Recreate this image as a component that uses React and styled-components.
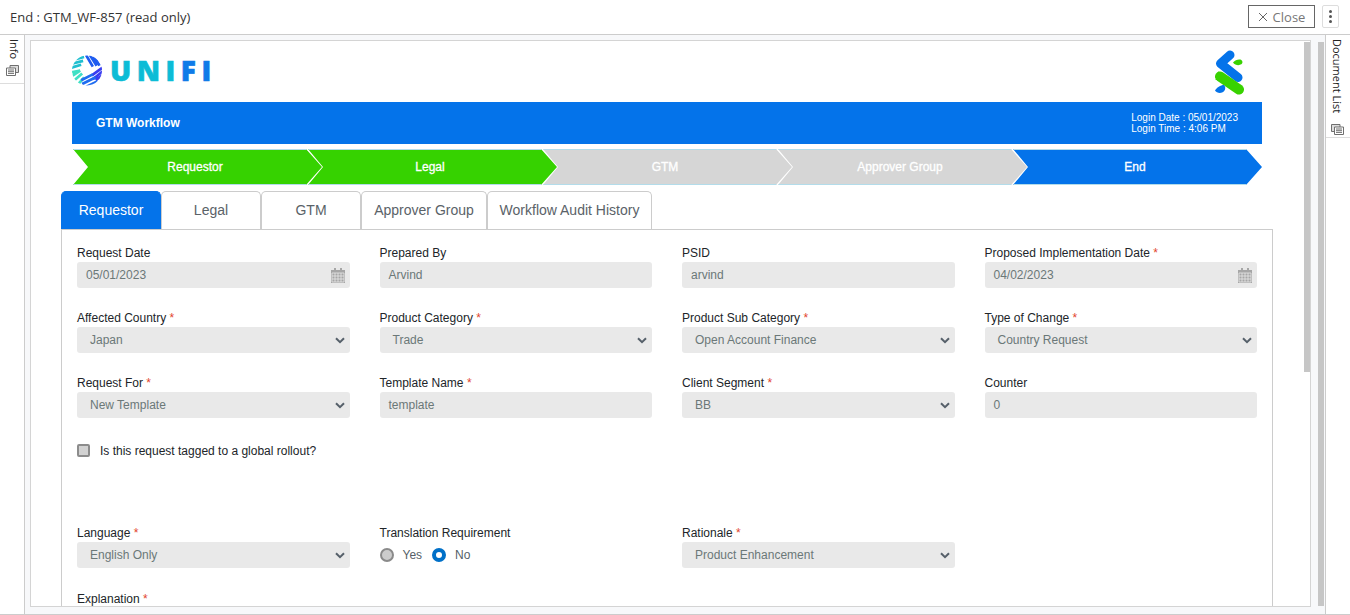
import React from "react";
import styled, { createGlobalStyle } from "styled-components";

const steps = [
  { label: "Requestor", tone: "done" },
  { label: "Legal", tone: "done" },
  { label: "GTM", tone: "todo" },
  { label: "Approver Group", tone: "todo" },
  { label: "End", tone: "current" },
];

const tabs = [
  { label: "Requestor", width: 100, active: true },
  { label: "Legal", width: 100 },
  { label: "GTM", width: 100 },
  { label: "Approver Group", width: 126 },
  { label: "Workflow Audit History", width: 165 },
];

const topFields = [
  { label: "Request Date", value: "05/01/2023", kind: "date" },
  { label: "Prepared By", value: "Arvind" },
  { label: "PSID", value: "arvind" },
  { label: "Proposed Implementation Date", value: "04/02/2023", kind: "date", required: true },
  { label: "Affected Country", value: "Japan", kind: "select", required: true },
  { label: "Product Category", value: "Trade", kind: "select", required: true },
  { label: "Product Sub Category", value: "Open Account Finance", kind: "select", required: true },
  { label: "Type of Change", value: "Country Request", kind: "select", required: true },
  { label: "Request For", value: "New Template", kind: "select", required: true },
  { label: "Template Name", value: "template", required: true },
  { label: "Client Segment", value: "BB", kind: "select", required: true },
  { label: "Counter", value: "0" },
];

const DocsIcon = ({ flip }) => (
  <svg width="13" height="11" viewBox="0 0 13 11" style={flip ? { transform: "scaleX(-1)" } : undefined}>
    <path d="M4 .5h8.500v7H4z" fill="#ddd" stroke="#6f6f6f" />
    <path d="M.5 3h9v7.500h-9z" fill="#fff" stroke="#6f6f6f" />
    <path d="M2 5h6M2 6.700h6M2 8.400h6" stroke="#6f6f6f" />
  </svg>
);

const Chevron = () => (
  <svg width="10" height="7" viewBox="0 0 10 7">
    <path d="M1 1.200l4 4 4-4" fill="none" stroke="#56606a" strokeWidth="2" />
  </svg>
);

const CalendarIcon = () => (
  <svg width="14" height="15" viewBox="0 0 14 15">
    <path d="M0 2h14v13H0z" fill="#a6a6a6" />
    <path d="M3 0h2v3H3zM9 0h2v3H9z" fill="#a6a6a6" />
    <path d="M1 5h12M1 8h12M1 11h12M1 14h12M1 5v9M4 5v9M7 5v9M10 5v9M13 5v9" stroke="#e9e9e9" strokeWidth=".8" fill="none" />
  </svg>
);

const UnifiMark = () => (
  <svg width="32" height="31" viewBox="0 0 32 32">
    <defs>
      <clipPath id="ring">
        <circle cx="16" cy="16" r="15.5" />
      </clipPath>
    </defs>
    <g clipPath="url(#ring)" fill="none" strokeWidth="2.800">
      <path d="M1 5l12-3M0 9l12-3M0 13l10-3" stroke="#1fbfd0" />
      <path d="M0 18l9-2M0 22l9-6M3 26l8-7M7 30l6-7" stroke="#3fe0c5" />
      <path d="M15 0l7 12M19 0l7 11M23 1l6 10" stroke="#1f5cf0" />
      <path d="M32 13l-11 8M32 17l-10 8M32 21l-7 5" stroke="#3a3df0" />
      <path d="M10 26l12-6M11 30l14-7M15 33l12-6" stroke="#1f6cf0" />
    </g>
  </svg>
);

const BankMark = () => (
  <svg width="30" height="46" viewBox="0 0 30 46">
    <path d="M15 5L5.500 13.500 23 27.500" fill="none" stroke="#0473ea" strokeWidth="9" strokeLinecap="round" strokeLinejoin="round" />
    <path d="M18 12.500c2-2.500 5-3.500 7.500-3 2.200.8 2.600 3.500.8 4.800-2.300 1.500-6.300 1-8.300-1.800z" fill="#38d200" />
    <path d="M5 26.500L24 39.500" fill="none" stroke="#38d200" strokeWidth="10" strokeLinecap="round" />
    <path d="M3.500 21L.5 30l6-1z" fill="#38d200" />
    <path d="M0 40.500c1.500-3 5.500-5.500 9-5.500 1.700 1.700 1.700 4.500 0 6.300-2.800 2.700-7.500 1.700-9-.8z" fill="#0473ea" />
  </svg>
);

const Field = ({ label, value, kind, required }) => (
  <Cell>
    <FieldLabel>
      {label}
      {required && <Star> *</Star>}
    </FieldLabel>
    <Control $select={kind === "select"}>
      <span>{value}</span>
      {kind === "select" && <Chevron />}
      {kind === "date" && <CalendarIcon />}
    </Control>
  </Cell>
);

const App = () => (
  <Screen>
    <GlobalStyle />
    <TopBar>
      <Title>End : GTM_WF-857 (read only)</Title>
      <TopActions>
        <CloseButton>
          <svg width="10" height="10" viewBox="0 0 10 10">
            <path d="M1 1l8 8M9 1l-8 8" stroke="#666" strokeWidth="1" />
          </svg>
          Close
        </CloseButton>
        <MenuButton>
          <Dot />
          <Dot />
          <Dot />
        </MenuButton>
      </TopActions>
    </TopBar>

    <Body>
      <Rail $side="left">
        <RailItem $height={49} $shift={4} $gap={6}>
          <RailText>Info</RailText>
          <DocsIcon />
        </RailItem>
      </Rail>

      <Main>
        <Frame>
          <Page>
            <LogoRow>
              <Brand>
                <UnifiMark />
                <Wordmark>
                  <Letters>UNI</Letters>
                  <Letters $blue>FI</Letters>
                </Wordmark>
              </Brand>
              <BankMark />
            </LogoRow>

            <HeaderBar>
              <HeaderTitle>GTM Workflow</HeaderTitle>
              <LoginInfo>
                <div>Login Date : 05/01/2023</div>
                <div>Login Time : 4:06 PM</div>
              </LoginInfo>
            </HeaderBar>

            <Stepper>
              {steps.map((s) => (
                <Step key={s.label} $tone={s.tone}>
                  {s.label}
                </Step>
              ))}
            </Stepper>

            <TabRow>
              {tabs.map((t) => (
                <Tab key={t.label} $width={t.width} $active={t.active}>
                  {t.label}
                </Tab>
              ))}
            </TabRow>

            <Panel>
              <FieldGrid>
                {topFields.map((f) => (
                  <Field key={f.label} {...f} />
                ))}
              </FieldGrid>

              <CheckRow>
                <CheckBox />
                Is this request tagged to a global rollout?
              </CheckRow>

              <FieldGrid>
                <Field label="Language" value="English Only" kind="select" required />
                <Cell>
                  <FieldLabel>Translation Requirement</FieldLabel>
                  <RadioRow>
                    <Radio />
                    <RadioText>Yes</RadioText>
                    <Radio $checked />
                    <RadioText>No</RadioText>
                  </RadioRow>
                </Cell>
                <Field label="Rationale" value="Product Enhancement" kind="select" required />
              </FieldGrid>

              <Explanation>
                Explanation<Star> *</Star>
              </Explanation>
            </Panel>
          </Page>
          <InnerThumb />
        </Frame>
        <OuterThumb />
      </Main>

      <Rail $side="right">
        <RailItem $height={103} $shift={-2} $gap={11} $iconShift={-2}>
          <RailText>Document List</RailText>
          <DocsIcon flip />
        </RailItem>
      </Rail>
    </Body>
  </Screen>
);

const GlobalStyle = createGlobalStyle`
  html, body {
    margin: 0;
    height: 100%;
    overflow: hidden;
    background: #fff;
  }
  * {
    box-sizing: border-box;
  }
`;

const Screen = styled.div`
  width: 1350px;
  height: 615px;
  display: flex;
  flex-direction: column;
  font-family: "Liberation Sans", Arial, sans-serif;
  color: #212529;
`;

const TopBar = styled.div`
  height: 35px;
  flex-shrink: 0;
  display: flex;
  align-items: center;
  justify-content: space-between;
  padding: 0 11px 1px 10px;
  border-bottom: 1px solid #ccc;
`;

const Title = styled.div`
  font-family: "Open Sans", sans-serif;
  font-size: 13px;
  color: #333;
`;

const TopActions = styled.div`
  display: flex;
  align-items: center;
  gap: 7px;
`;

const CloseButton = styled.div`
  width: 67px;
  height: 23px;
  display: flex;
  align-items: center;
  justify-content: center;
  gap: 5px;
  border: 1px solid #666;
  font-family: "Open Sans", sans-serif;
  font-size: 13px;
  color: #777;
`;

const MenuButton = styled.div`
  width: 17px;
  height: 23px;
  display: flex;
  flex-direction: column;
  align-items: center;
  justify-content: center;
  gap: 2px;
  border: 1px solid #ddd;
  border-radius: 2px;
`;

const Dot = styled.span`
  width: 3px;
  height: 3px;
  border-radius: 50%;
  background: #555;
`;

const Body = styled.div`
  flex: 1;
  min-height: 0;
  display: flex;
  border-bottom: 1px solid #ccc;
`;

const Rail = styled.div`
  width: 25px;
  flex-shrink: 0;
  ${(p) => (p.$side === "left" ? "border-right" : "border-left")}: 1px solid #ccc;
`;

const RailItem = styled.div`
  height: ${(p) => p.$height}px;
  display: flex;
  flex-direction: column;
  align-items: center;
  gap: ${(p) => p.$gap}px;
  padding-top: 4px;
  border-bottom: 1px solid #ddd;
  & > span {
    margin-left: ${(p) => p.$shift}px;
  }
  & > svg {
    margin-left: ${(p) => p.$iconShift || 0}px;
  }
`;

const RailText = styled.span`
  writing-mode: vertical-rl;
  font-family: "Open Sans", sans-serif;
  font-size: 11px;
  line-height: 14px;
  color: #222;
`;

const Main = styled.div`
  flex: 1;
  min-width: 0;
  position: relative;
  background: #f7f8fa;
  padding: 5px 14px 7px 5px;
`;

const Frame = styled.div`
  position: relative;
  height: 100%;
  overflow: hidden;
  background: #fff;
  border: 1px solid #d4d4d4;
`;

const Page = styled.div`
  padding: 0 37px 0 30px;
`;

const Thumb = styled.div`
  position: absolute;
  top: 1px;
  width: 6px;
  background: #c6c6c6;
`;

const InnerThumb = styled(Thumb)`
  right: 0;
  height: 330px;
`;

const OuterThumb = styled(Thumb)`
  top: 7px;
  right: 1px;
  height: 564px;
`;

const LogoRow = styled.div`
  height: 61px;
  display: flex;
  align-items: flex-start;
  justify-content: space-between;
  padding: 9px 28px 0 11px;
`;

const Brand = styled.div`
  display: flex;
  align-items: center;
  gap: 7px;
  margin: 4px 0 0 -1px;
`;

const Wordmark = styled.div`
  font-family: "Open Sans", sans-serif;
  font-weight: 800;
  font-size: 28px;
  line-height: 32px;
  letter-spacing: 5.500px;
  -webkit-text-stroke: 0.6px currentColor;
`;

const Letters = styled.span`
  color: ${(p) => (p.$blue ? "#0f7be8" : "#0cbcd6")};
`;

const HeaderBar = styled.div`
  height: 42px;
  margin: 0 11px;
  padding: 0 24px;
  display: flex;
  align-items: center;
  justify-content: space-between;
  background: #0473ea;
  color: #fff;
`;

const HeaderTitle = styled.div`
  font-size: 12px;
  font-weight: 700;
`;

const LoginInfo = styled.div`
  font-size: 10px;
  line-height: 11px;
`;

const stepColors = {
  done: "#36d200",
  todo: "#d6d6d6",
  current: "#0473ea",
};

const Stepper = styled.div`
  display: flex;
  margin: 5px 0 6px 12px;
`;

const Step = styled.div`
  width: 249px;
  height: 36px;
  flex-shrink: 0;
  margin-right: -14px;
  padding-right: 5px;
  display: flex;
  align-items: center;
  justify-content: center;
  font-size: 12px;
  -webkit-text-stroke: 0.3px #fff;
  color: #fff;
  background: ${(p) => stepColors[p.$tone]};
  box-shadow: inset 0 1px 0 #b3dcea, inset 0 -1px 0 #b3dcea;
  clip-path: polygon(0 0, 233px 0, 249px 50%, 233px 100%, 0 100%, 15px 50%);
`;

const TabRow = styled.div`
  display: flex;
  height: 38px;
`;

const Tab = styled.div`
  width: ${(p) => p.$width}px;
  padding-bottom: 2px;
  display: flex;
  align-items: center;
  justify-content: center;
  font-size: 14px;
  border: 1px solid ${(p) => (p.$active ? "#0473ea" : "#ccc")};
  border-bottom: none;
  border-radius: 5px 5px 0 0;
  color: ${(p) => (p.$active ? "#fff" : "#5a6268")};
  background: ${(p) => (p.$active ? "#0473ea" : "#fff")};
`;

const Panel = styled.div`
  border: 1px solid #ccc;
  padding-top: 15px;
  height: 500px;
`;

const FieldGrid = styled.div`
  display: grid;
  grid-template-columns: repeat(4, 1fr);
`;

const Cell = styled.div`
  padding: 0 15px;
  margin-bottom: 22px;
`;

const FieldLabel = styled.div`
  height: 17px;
  font-size: 12px;
  line-height: 16px;
`;

const Star = styled.span`
  color: #e2452d;
`;

const Control = styled.div`
  height: 26px;
  display: flex;
  align-items: center;
  justify-content: space-between;
  padding: 0 ${(p) => (p.$select ? "5px 0 13px" : "5px 0 9px")};
  font-size: 12px;
  color: #6b7878;
  background: #e9e9e9;
  border-radius: 3px;
`;

const CheckRow = styled.div`
  height: 21px;
  padding-left: 15px;
  display: flex;
  align-items: center;
  gap: 10px;
  font-size: 12px;
  margin-bottom: 64px;
`;

const CheckBox = styled.span`
  width: 13px;
  height: 13px;
  background: #d2d2d2;
  border: 2px solid #8c8c8c;
  border-radius: 2px;
`;

const RadioRow = styled.div`
  height: 26px;
  display: flex;
  align-items: center;
`;

const Radio = styled.span`
  width: 14px;
  height: 14px;
  margin-right: 9px;
  border-radius: 50%;
  background: ${(p) => (p.$checked ? "#fff" : "#ccc")};
  border: ${(p) => (p.$checked ? "4px solid #0070c8" : "2px solid #8a8a8a")};
`;

const RadioText = styled.span`
  font-size: 12px;
  color: #555f68;
  margin-right: 10px;
`;

const Explanation = styled(FieldLabel)`
  padding: 1px 0 0 15px;
  height: 18px;
`;

export default App;
